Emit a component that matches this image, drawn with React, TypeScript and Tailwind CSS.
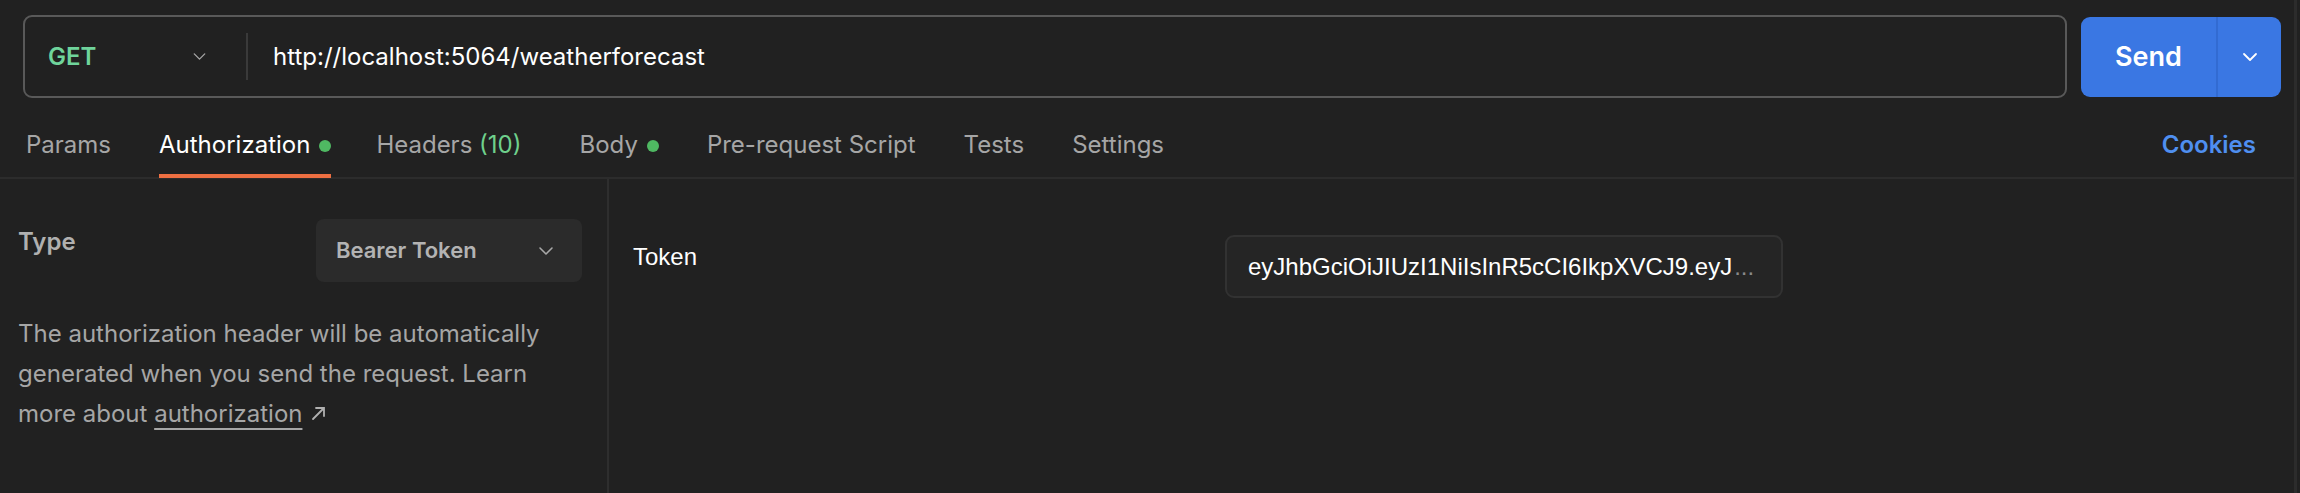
import { ChevronDown } from "lucide-react";

// Request builder: url bar, tab strip, auth panel.

const tabs = [
  { label: "Params", cls: "" },
  { label: "Authorization", active: true, dot: true, cls: "mr-[-3px]" },
  { label: "Headers", count: "(10)", cls: "mr-[10px]" },
  { label: "Body", dot: true, cls: "" },
  { label: "Pre-request Script", cls: "" },
  { label: "Tests", cls: "" },
  { label: "Settings", cls: "" },
];

export default function App() {
  return (
    <div className="w-[2300px] h-[493px] bg-[#212121] flex font-['Inter',sans-serif] overflow-hidden">
      <div className="w-[2297px] flex flex-col border-r-[3px] border-[#2c2c2c]">
        {/* url row */}
        <div className="flex gap-[14px] pl-[23px] pr-[13px] pt-[15px]">
          <div className="flex-1 h-[83px] border-2 border-[#595959] rounded-[9px] flex items-center">
            <div className="w-[221px] flex items-center justify-between pl-[23px] pr-[36px]">
              <span className="text-[24px] font-semibold text-[#6fd49b] leading-[30px]">GET</span>
              <ChevronDown className="w-[21px] h-[21px] text-[#a8a8a8]" strokeWidth={1.5} />
            </div>
            <div className="w-[2px] h-[47px] bg-[#3a3a3a]" />
            <span className="pl-[25px] text-[24px] text-white leading-[30px]">http://localhost:5064/weatherforecast</span>
          </div>
          <div className="w-[200px] h-[80px] mt-[2px] rounded-[9px] bg-[#3a77e3] flex">
            <div className="w-[135px] flex items-center justify-center text-[27px] font-semibold text-white">Send</div>
            <div className="w-[2px] bg-[#326bd2]" />
            <div className="flex-1 flex items-center justify-center">
              <ChevronDown className="w-[24px] h-[24px] text-white" strokeWidth={1.8} />
            </div>
          </div>
        </div>

        {/* tabs */}
        <div className="h-[81px] flex items-stretch pl-[26px] pr-[38px] border-b-2 border-[#2c2c2c]">
          <div className="flex gap-[48px]">
            {tabs.map((t) => (
              <div key={t.label} className={`relative flex items-end pb-[17px] ${t.cls}`}>
                <span className={`text-[24px] leading-[30px] ${t.active ? "text-white" : "text-[#a6a6a6]"}`}>
                  {t.label}
                  {t.count && <span className="text-[#6fd08c]"> {t.count}</span>}
                </span>
                {t.dot && <span className="ml-[9px] mb-[8px] w-[12px] h-[12px] rounded-full bg-[#4fb862]" />}
                {t.active && <span className="absolute left-0 right-0 bottom-[-1px] h-[4px] bg-[#ee6f42]" />}
              </div>
            ))}
          </div>
          <div className="ml-auto flex items-end pb-[17px]">
            <span className="text-[24px] leading-[30px] font-semibold text-[#4f8ff0]">Cookies</span>
          </div>
        </div>

        {/* body */}
        <div className="flex flex-1">
          <div className="w-[609px] border-r-2 border-[#2e2e2e] pl-[18px] pr-[25px] pt-[40px]">
            <div className="flex items-start justify-between">
              <span className="mt-[8px] text-[24px] leading-[30px] font-semibold text-[#b0b0b0]">Type</span>
              <div className="w-[266px] h-[63px] rounded-[8px] bg-[#2b2b2b] flex items-center justify-between pl-[20px] pr-[24px]">
                <span className="text-[22px] font-semibold text-[#b3b3b3]">Bearer Token</span>
                <ChevronDown className="w-[24px] h-[24px] text-[#a8a8a8]" strokeWidth={1.6} />
              </div>
            </div>
            <p className="mt-[32px] text-[24px] leading-[40px] text-[#a6a6a6]">
              The authorization header will be automatically generated when you send the request. Learn more about{" "}
              <a className="underline underline-offset-[6px] decoration-2 decoration-[#a6a6a6]">authorization</a>
              <svg
                className="inline-block ml-[9px] mb-[4px] w-[15px] h-[15px]"
                viewBox="0 0 15 15"
                fill="none"
                stroke="#b0b0b0"
                strokeWidth="1.8"
                strokeLinecap="round"
              >
                <path d="M2 13 L13 2 M5 2 H13 V10" />
              </svg>
            </p>
          </div>
          <div className="flex-1 flex items-start pl-[24px] pt-[56px]">
            <span className="w-[592px] mt-[7px] font-['Liberation_Sans',Arial,sans-serif] text-[24px] leading-[30px] text-white">
              Token
            </span>
            <div className="w-[558px] h-[63px] rounded-[9px] border-2 border-[#323232] bg-[#252525] flex items-center pl-[21px] pr-[23px] font-['Liberation_Sans',Arial,sans-serif] text-[24px] text-white whitespace-nowrap overflow-hidden">
              <span>eyJhbGciOiJIUzI1NiIsInR5cCI6IkpXVCJ9.eyJ</span>
              <span className="ml-[2px] text-[#8a8a8a]">...</span>
            </div>
          </div>
        </div>
      </div>
    </div>
  );
}
